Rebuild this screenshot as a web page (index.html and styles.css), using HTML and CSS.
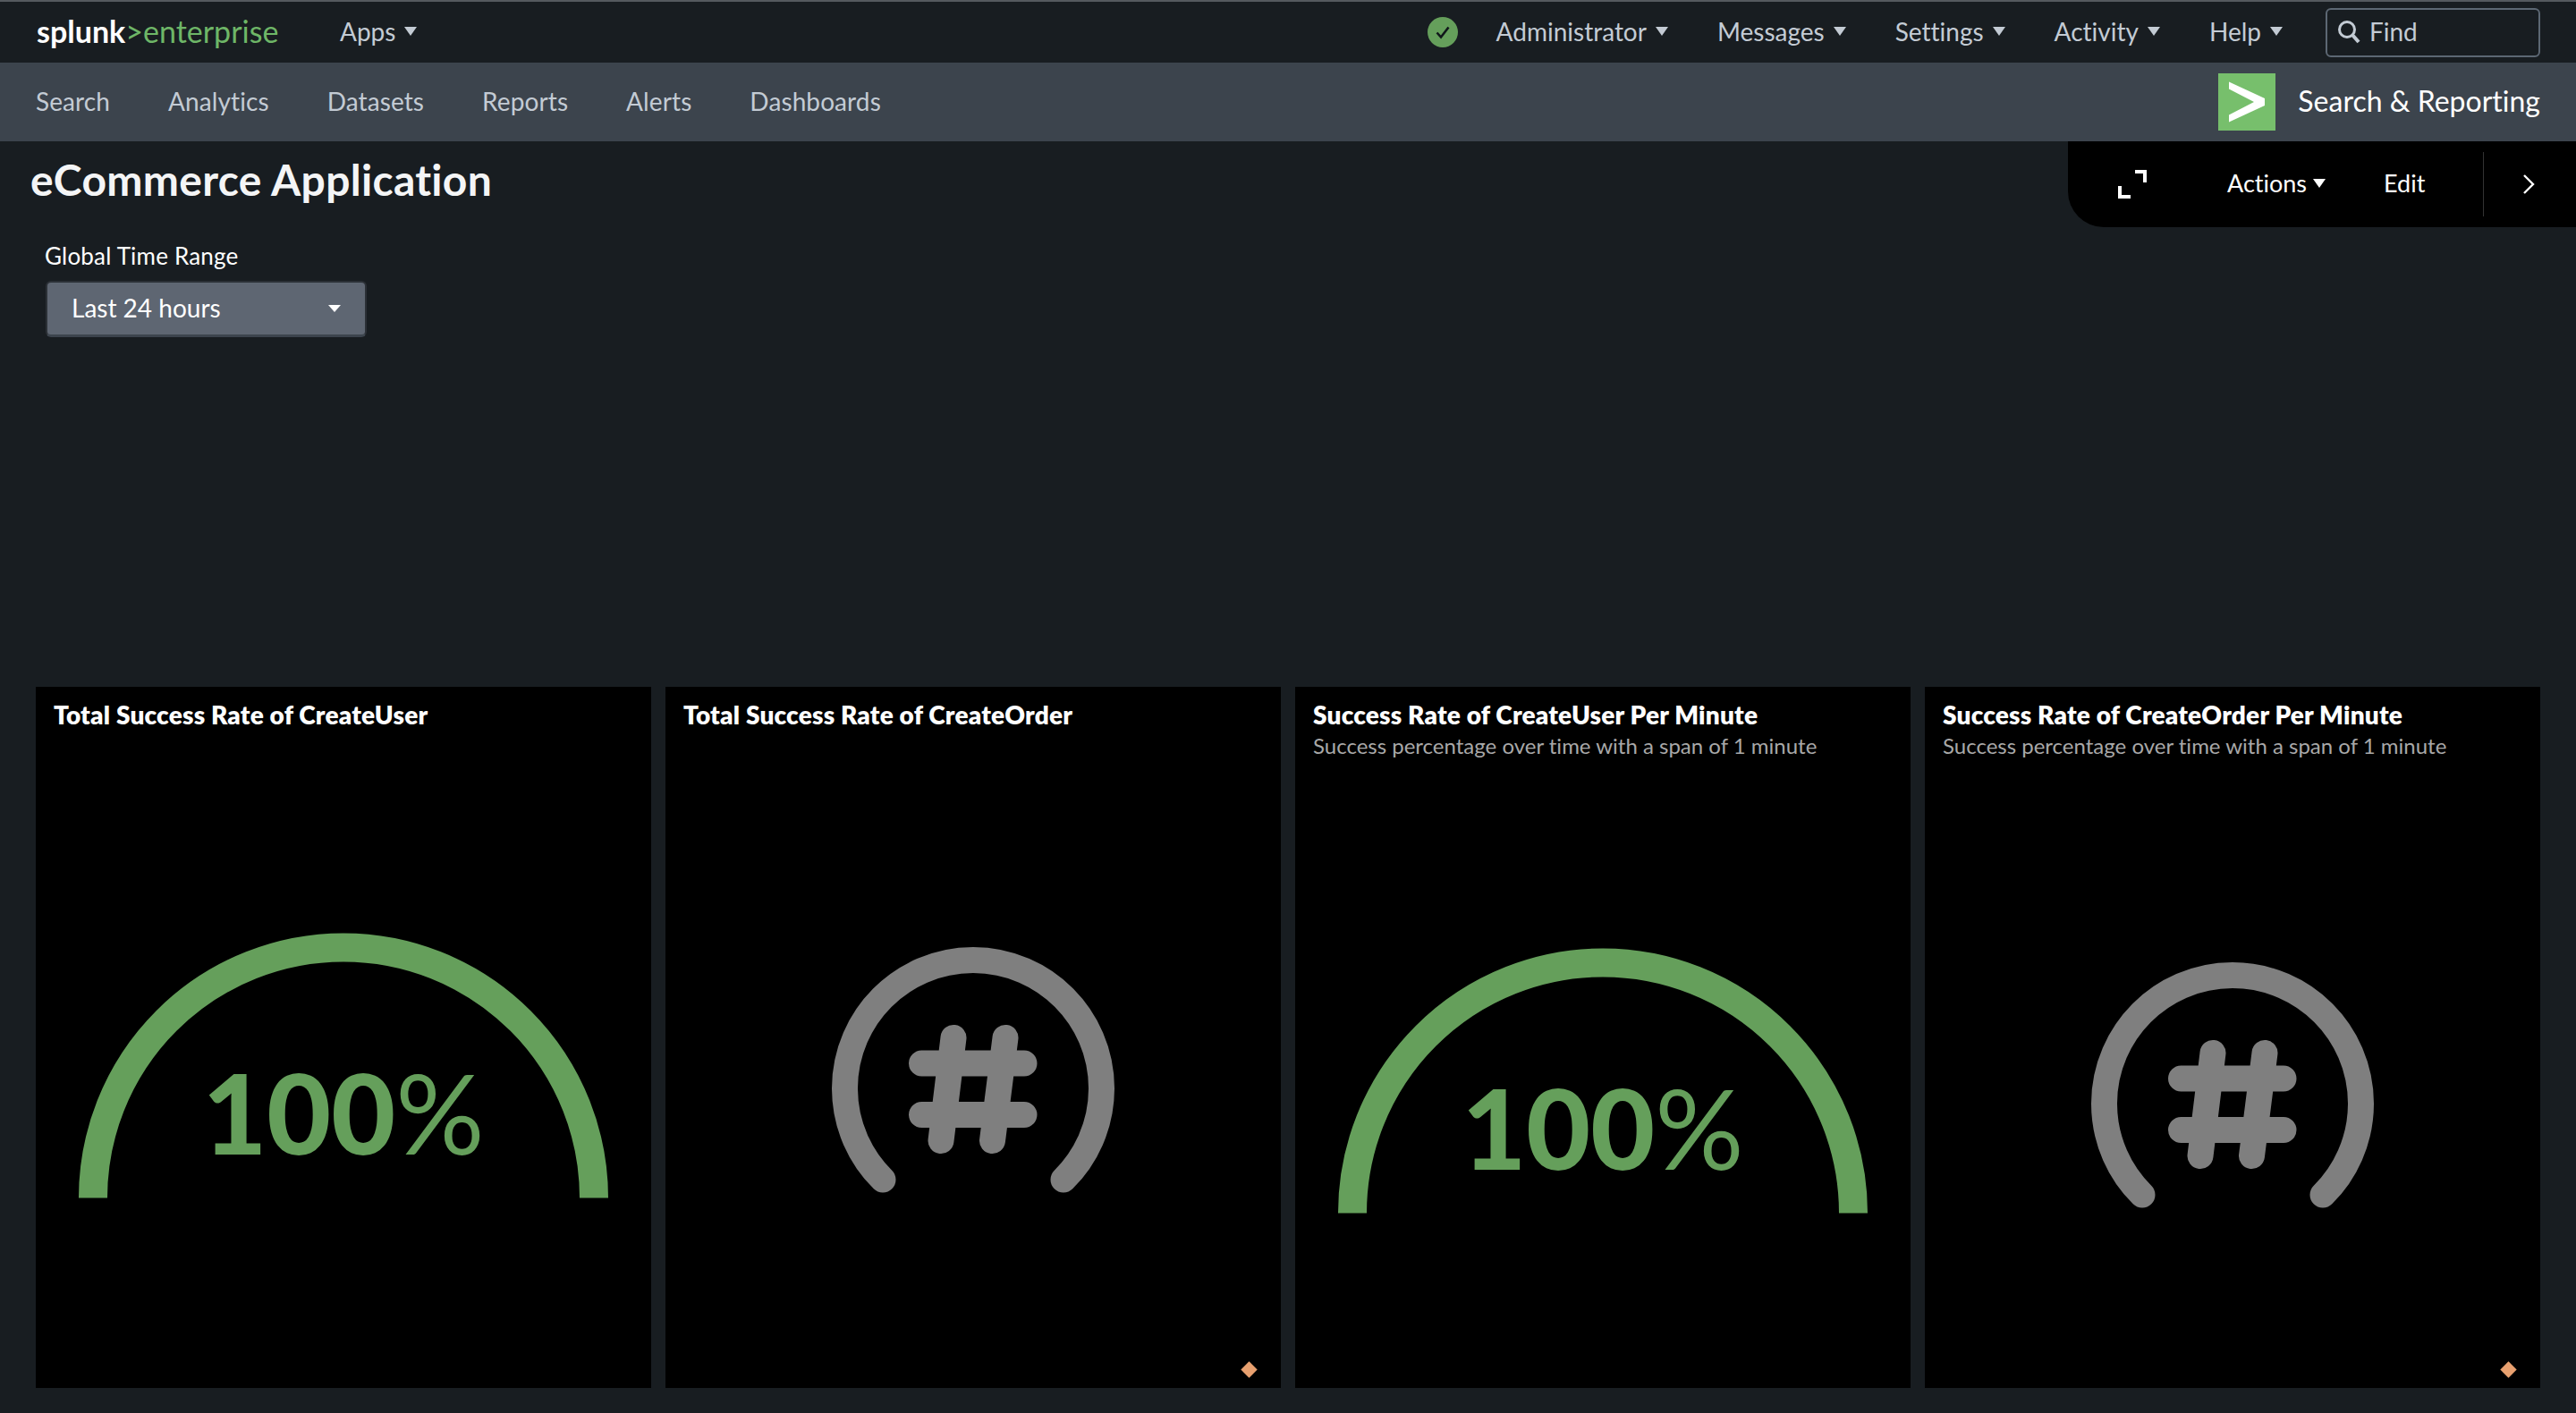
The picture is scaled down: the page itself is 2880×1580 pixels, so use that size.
FILE: index.html
```html
<!DOCTYPE html>
<html lang="en">
<head>
    <meta charset="UTF-8">
    <title>eCommerce Application</title>
    <link rel="stylesheet" href="styles.css">
</head>
<body>
    <header class="topbar">
        <div class="logo"><span class="logo-splunk">splunk</span><span class="logo-green">&gt;enterprise</span></div>
        <a class="menu apps">Apps<i class="caret"></i></a>
        <div class="topbar-right">
            <svg class="status" width="34" height="34" viewBox="0 0 34 34">
                <circle cx="17" cy="17" r="17" fill="#659f5b"/>
                <path d="M10.5 17.5l4.5 5 8.5-11" fill="none" stroke="#10161a" stroke-width="2.6"/>
            </svg>
            <a class="menu admin">Administrator<i class="caret"></i></a>
            <a class="menu">Messages<i class="caret"></i></a>
            <a class="menu">Settings<i class="caret"></i></a>
            <a class="menu">Activity<i class="caret"></i></a>
            <a class="menu">Help<i class="caret"></i></a>
            <div class="find">
                <svg width="26" height="28" viewBox="0 0 26 28">
                    <circle cx="11" cy="11" r="8.5" fill="none" stroke="#c3cbd4" stroke-width="3"/>
                    <path d="M17 17l7 8" stroke="#c3cbd4" stroke-width="4"/>
                </svg>
                <span>Find</span>
            </div>
        </div>
    </header>

    <nav class="appbar">
        <a>Search</a>
        <a>Analytics</a>
        <a>Datasets</a>
        <a>Reports</a>
        <a>Alerts</a>
        <a>Dashboards</a>
        <div class="appname">
            <svg width="64" height="64" viewBox="0 0 64 64">
                <rect width="64" height="64" fill="#77bf6c"/>
                <path d="M12 9.5L52 28V36L12 54.5V46.5L40 32L12 17.5Z" fill="#fff"/>
            </svg>
            <span>Search &amp; Reporting</span>
        </div>
    </nav>

    <main>
        <div class="title-row">
            <h1>eCommerce Application</h1>
            <div class="toolbar">
                <svg class="expand" width="32" height="32" viewBox="0 0 32 32">
                    <path d="M19 2h11v12M2 18v12h12" fill="none" stroke="#fff" stroke-width="4"/>
                </svg>
                <a class="actions">Actions<i class="caret"></i></a>
                <a class="edit">Edit</a>
                <span class="divider"></span>
                <svg class="more" width="14" height="22" viewBox="0 0 14 22">
                    <path d="M2 1l10 10-10 10" fill="none" stroke="#fff" stroke-width="2.4"/>
                </svg>
            </div>
        </div>

        <div class="filter">
            <label>Global Time Range</label>
            <div class="select"><span>Last 24 hours</span><i class="caret"></i></div>
        </div>

        <section class="panels">
            <article class="panel">
                <div class="panel-head">
                    <h2>Total Success Rate of CreateUser</h2>
                </div>
                <div class="panel-body">
                    <svg class="gauge" viewBox="0 0 688 600">
                        <path d="M64 451.5A280 280 0 0 1 624 451.5" fill="none" stroke="#659f5b" stroke-width="32"/>
                        <text x="344" y="403" text-anchor="middle" class="gauge-value">100<tspan class="gauge-unit">%</tspan></text>
                    </svg>
                </div>
            </article>

            <article class="panel">
                <div class="panel-head">
                    <h2>Total Success Rate of CreateOrder</h2>
                </div>
                <div class="panel-body">
                    <svg class="gauge" viewBox="0 0 688 600">
                        <g fill="none" stroke="#7f7f7f" stroke-width="29" stroke-linecap="round">
                            <path d="M243 431A143.5 143.5 0 1 1 445 431"/>
                            <path d="M286.5 301H401M286.5 358.6H401M322 272.5L308 387.5M380 272.5L365.5 387.5"/>
                        </g>
                    </svg>
                </div>
                <i class="diamond"></i>
            </article>

            <article class="panel">
                <div class="panel-head">
                    <h2>Success Rate of CreateUser Per Minute</h2>
                    <p>Success percentage over time with a span of 1 minute</p>
                </div>
                <div class="panel-body">
                    <svg class="gauge" viewBox="0 0 688 600">
                        <path d="M64 451.5A280 280 0 0 1 624 451.5" fill="none" stroke="#659f5b" stroke-width="32"/>
                        <text x="344" y="403" text-anchor="middle" class="gauge-value">100<tspan class="gauge-unit">%</tspan></text>
                    </svg>
                </div>
            </article>

            <article class="panel">
                <div class="panel-head">
                    <h2>Success Rate of CreateOrder Per Minute</h2>
                    <p>Success percentage over time with a span of 1 minute</p>
                </div>
                <div class="panel-body">
                    <svg class="gauge" viewBox="0 0 688 600">
                        <g fill="none" stroke="#7f7f7f" stroke-width="29" stroke-linecap="round">
                            <path d="M243 431A143.5 143.5 0 1 1 445 431"/>
                            <path d="M286.5 301H401M286.5 358.6H401M322 272.5L308 387.5M380 272.5L365.5 387.5"/>
                        </g>
                    </svg>
                </div>
                <i class="diamond"></i>
            </article>
        </section>
    </main>
</body>
</html>
```

FILE: styles.css
```css
* {
    box-sizing: border-box;
}

html, body {
    height: 100%;
}

body {
    margin: 0;
    display: flex;
    flex-direction: column;
    background: #181d21;
    color: #fff;
    font-family: "Lato", "Liberation Sans", sans-serif;
    font-variant-ligatures: none;
    overflow: hidden;
}

/* top black bar */
.topbar {
    display: flex;
    align-items: center;
    height: 70px;
    flex: none;
    padding: 0 40px 0 41px;
    background: #181d21;
    border-top: 2px solid #555a5f;
    color: #c3cbd4;
    font-size: 28px;
}

.logo {
    font-size: 34px;
    width: 339px;
    padding-bottom: 3px;
}

.logo-splunk {
    color: #fff;
    font-weight: 700;
}

.logo-green {
    color: #6eb667;
}

.menu {
    display: flex;
    align-items: center;
    padding-bottom: 3px;
}

.caret {
    display: inline-block;
    width: 0;
    height: 0;
    margin-left: 10px;
    border-left: 7.5px solid transparent;
    border-right: 7.5px solid transparent;
    border-top: 10px solid currentColor;
}

.topbar-right {
    display: flex;
    align-items: center;
    gap: 55px;
    margin-left: auto;
}

.status {
    margin-right: -12px;
}

.find {
    display: flex;
    align-items: center;
    gap: 10px;
    width: 240px;
    height: 55px;
    margin-left: -7px;
    padding-left: 11px;
    border: 2px solid #5c6773;
    border-radius: 6px;
}

.find span {
    padding-bottom: 3px;
}

/* app nav */
.appbar {
    display: flex;
    align-items: center;
    gap: 65px;
    height: 88px;
    flex: none;
    padding: 0 40px;
    background: #3c444d;
    color: #c3cbd4;
    font-size: 28px;
    letter-spacing: 0.1px;
}

.appbar a {
    padding-bottom: 3px;
}

.appname {
    display: flex;
    align-items: center;
    gap: 25px;
    margin-left: auto;
    color: #fff;
    font-size: 32px;
    letter-spacing: 0;
}

.appname span {
    padding-bottom: 3px;
}

/* dashboard */
main {
    flex: 1;
    display: flex;
    flex-direction: column;
    padding-bottom: 28px;
    min-height: 0;
}

.title-row {
    display: flex;
    justify-content: space-between;
    align-items: flex-start;
    height: 96px;
    flex: none;
}

h1 {
    margin: 16px 0 0 34px;
    font-size: 48px;
    line-height: 54px;
    font-weight: 700;
    letter-spacing: 0.3px;
    color: #f4f5f6;
}

.toolbar {
    display: flex;
    align-items: center;
    width: 568px;
    height: 96px;
    padding: 0 46px 0 56px;
    background: #000;
    border-bottom-left-radius: 40px;
    font-size: 27px;
}

.expand {
    flex: none;
}

.actions {
    display: flex;
    align-items: center;
    margin-left: 90px;
    padding-bottom: 3px;
}

.actions .caret {
    margin-left: 7px;
}

.edit {
    margin-left: 65px;
    padding-bottom: 3px;
}

.divider {
    width: 1px;
    height: 72px;
    margin-left: 65px;
    background: #333;
}

.more {
    margin-left: auto;
}

.filter {
    flex: none;
    padding: 0 0 0 50px;
    margin-top: 16px;
}

.filter label {
    display: block;
    font-size: 26px;
    line-height: 32px;
    letter-spacing: 0.2px;
}

.select {
    display: flex;
    align-items: center;
    justify-content: space-between;
    width: 359px;
    height: 63px;
    margin: 12px 0 0 1px;
    padding: 0 27px 0 27px;
    background: #5e6672;
    border: 2px solid #2b3036;
    border-bottom: 3px solid #3c444d;
    border-radius: 6px;
    font-size: 28px;
}

.select span {
    padding-bottom: 3px;
}

.select .caret {
    border-top: 8px solid #fff;
}

.panels {
    flex: 1;
    display: grid;
    grid-template-columns: repeat(4, 688px);
    gap: 16px;
    padding: 0 40px;
    margin-top: 391px;
    min-height: 0;
}

.panel {
    position: relative;
    display: flex;
    flex-direction: column;
    background: #000;
    min-height: 0;
}

.panel-head {
    flex: none;
    height: 56px;
    padding: 15px 20px 0;
}

.panel-head:has(p) {
    height: 89px;
}

h2 {
    margin: 0;
    font-size: 28px;
    line-height: 32px;
    font-weight: 800;
    letter-spacing: 0.2px;
    color: #fff;
}

.panel-head p {
    margin: 4px 0 0;
    font-size: 24px;
    line-height: 30px;
    color: #a8a8a8;
}

.panel-body {
    flex: 1;
    display: flex;
    align-items: center;
    justify-content: center;
    min-height: 0;
}

.gauge {
    width: 688px;
    height: 600px;
}

.gauge-value {
    fill: #659f5b;
    font-size: 124px;
    font-weight: 900;
}

.gauge-unit {
    font-weight: 400;
}

.diamond {
    position: absolute;
    right: 29px;
    bottom: 14px;
    width: 13px;
    height: 13px;
    background: #e8a06f;
    transform: rotate(45deg);
}
```
